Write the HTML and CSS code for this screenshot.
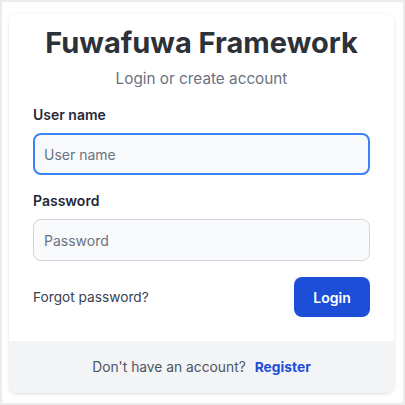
FILE: index.html
```html
<!DOCTYPE html>
<html lang="en">
<head>
<meta charset="utf-8">
<title>Login</title>
<link rel="stylesheet" href="styles.css">
</head>
<body>
<div class="frame">
  <div class="card">
    <div class="card-body">
      <h1 class="title">Fuwafuwa Framework</h1>
      <p class="subtitle">Login or create account</p>
      <form class="form">
        <label class="label" for="user">User name</label>
        <input class="input input-focus" id="user" type="text" placeholder="User name">
        <label class="label label-gap" for="pass">Password</label>
        <input class="input" id="pass" type="password" placeholder="Password">
        <div class="actions">
          <a class="forgot" href="#">Forgot password?</a>
          <button class="btn" type="button">Login</button>
        </div>
      </form>
    </div>
    <div class="card-footer">
      <span class="muted">Don't have an account?</span>
      <a class="register" href="#">Register</a>
    </div>
  </div>
</div>
</body>
</html>
```
FILE: styles.css
```css
* { box-sizing: border-box; }
html, body { margin: 0; padding: 0; background: #fff; }
body { font-family: Inter, "Noto Sans", sans-serif; }
.frame {
  width: 405px;
  height: 405px;
  border: 2px solid #ececec;
  padding: 12px 9px 10px 7px;
  background: #fff;
}
.card {
  height: 100%;
  background: #fff;
  border-radius: 8px;
  box-shadow: 0 1px 4px rgba(0,0,0,0.09), 0 1px 2px rgba(0,0,0,0.05);
  display: flex;
  flex-direction: column;
  overflow: hidden;
}
.card-body {
  flex: 1;
  padding: 12px 24px 24px;
  display: flex;
  flex-direction: column;
}
.title {
  margin: 0;
  font-size: 29px;
  line-height: 34px;
  font-weight: 700;
  color: #2d3239;
  text-align: center;
}
.subtitle {
  margin: 7px 0 0;
  font-size: 15.3px;
  line-height: 24px;
  color: #6b7280;
  text-align: center;
}
.form {
  margin-top: 14px;
  display: flex;
  flex-direction: column;
}
.label {
  font-size: 14px;
  line-height: 20px;
  font-weight: 600;
  color: #1f2937;
}
.label-gap { margin-top: 16px; }
.input {
  margin-top: 8px;
  height: 42px;
  width: 100%;
  border: 1px solid #d1d5db;
  border-radius: 8px;
  background: #f9fafb;
  padding: 0 10px;
  font-family: inherit;
  font-size: 14px;
  color: #111827;
  outline: none;
}
.input::placeholder { color: #6b7280; }
.input-focus {
  border: 2px solid #3b82f6;
  padding: 0 9px;
  caret-color: #111;
}
.actions {
  margin-top: 16px;
  display: flex;
  align-items: center;
  justify-content: space-between;
}
.forgot {
  font-size: 13.7px;
  color: #374151;
  text-decoration: none;
}
.btn {
  width: 76px;
  height: 40px;
  border: none;
  border-radius: 8px;
  background: #1d4ed8;
  color: #fff;
  font-family: inherit;
  font-size: 14px;
  font-weight: 600;
}
.card-footer {
  height: 52px;
  background: #f3f4f6;
  display: flex;
  align-items: center;
  justify-content: center;
  gap: 9px;
  font-size: 13.8px;
}
.muted { color: #4b5563; }
.register {
  color: #1d4ed8;
  font-weight: 700;
  text-decoration: none;
}
```
